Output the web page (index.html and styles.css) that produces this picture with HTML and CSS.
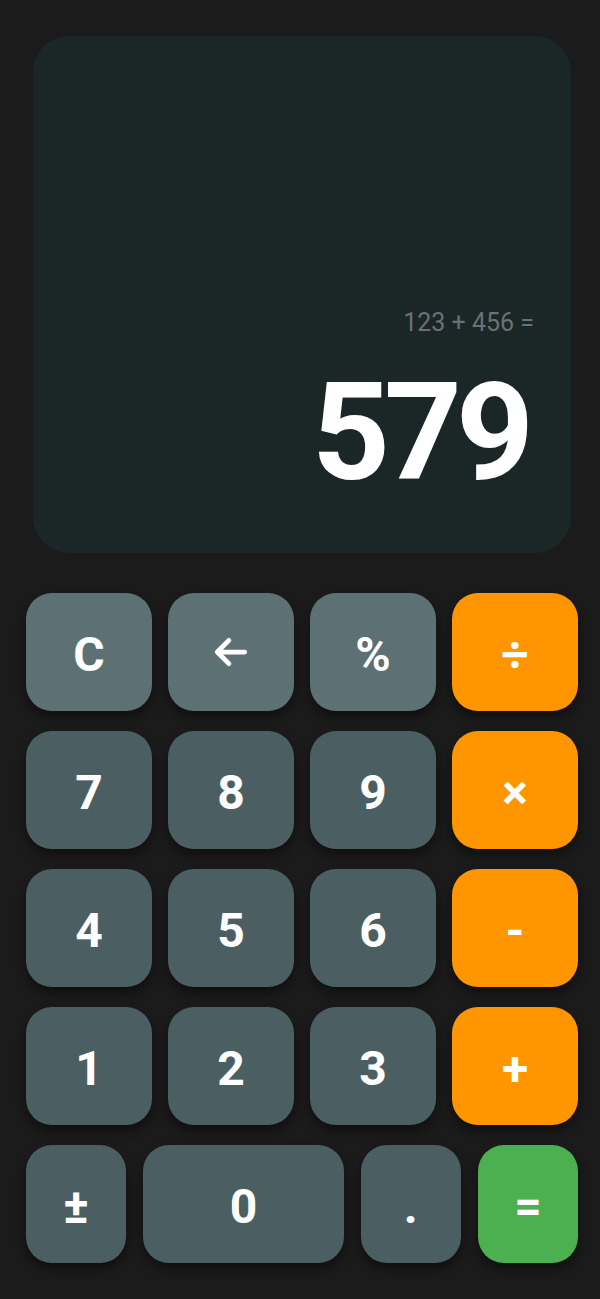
FILE: index.html
```html
<!DOCTYPE html>
<html lang="en">
<head>
<meta charset="utf-8">
<title>Calculator</title>
<link rel="stylesheet" href="styles.css">
</head>
<body>
<main class="calc">
  <section class="display">
    <div class="expr">123 + 456 =</div>
    <div class="result">579</div>
  </section>
  <section class="keys">
    <button class="key fn">C</button>
    <button class="key fn" aria-label="Backspace">
      <svg class="icon" width="38" height="38" viewBox="0 0 36 36" fill="none" stroke="#fff" stroke-width="4.5" stroke-linecap="round" stroke-linejoin="round"><path d="M31 18H5M16 7L5 18l11 11"/></svg>
    </button>
    <button class="key fn">%</button>
    <button class="key op">÷</button>
    <button class="key num">7</button>
    <button class="key num">8</button>
    <button class="key num">9</button>
    <button class="key op">×</button>
    <button class="key num">4</button>
    <button class="key num">5</button>
    <button class="key num">6</button>
    <button class="key op">-</button>
    <button class="key num">1</button>
    <button class="key num">2</button>
    <button class="key num">3</button>
    <button class="key op">+</button>
  </section>
  <section class="last-row">
    <button class="key num small">±</button>
    <button class="key num wide">0</button>
    <button class="key num small">.</button>
    <button class="key eq small">=</button>
  </section>
</main>
</body>
</html>
```
FILE: styles.css
```css
* { box-sizing: border-box; }
html, body {
  margin: 0;
  padding: 0;
  background: #1b1b1b;
}
body {
  font-family: Roboto, "Liberation Sans", sans-serif;
  width: 600px;
  height: 1299px;
  overflow: hidden;
}
.calc {
  padding: 36px 22px 0 26px;
  display: flex;
  flex-direction: column;
}
.display {
  margin: 0 7px;
  height: 517px;
  background: #1b2627;
  border-radius: 36px;
  display: flex;
  flex-direction: column;
  justify-content: flex-end;
  align-items: flex-end;
  padding: 0 37px 52px 0;
}
.expr {
  font-size: 25px;
  font-weight: 400;
  line-height: 1;
  color: #687275;
  margin-bottom: 30px;
}
.result {
  font-size: 136px;
  font-weight: 700;
  line-height: 1;
  letter-spacing: -6px;
  color: #fff;
  margin-right: 6px;
}
.keys {
  margin-top: 40px;
  display: grid;
  grid-template-columns: repeat(4, 1fr);
  grid-auto-rows: 118px;
  gap: 20px 16px;
}
.last-row {
  margin-top: 20px;
  display: flex;
  gap: 17px;
  height: 118px;
}
.key {
  border: none;
  border-radius: 26px;
  color: #fff;
  font-family: Roboto, "Liberation Sans", sans-serif;
  font-weight: 700;
  font-size: 48px;
  display: flex;
  align-items: center;
  justify-content: center;
  padding: 4px 0 0;
  box-shadow: 0 6px 12px rgba(0, 0, 0, 0.45);
}
.fn { background: #5d7174; }
.num { background: #4b5f63; }
.op { background: #ff9500; }
.eq { background: #4caf50; }
.small { flex: 1 1 0; }
.wide { flex: 2 1 0; }
.icon { display: block; margin-top: -4px; }
```
